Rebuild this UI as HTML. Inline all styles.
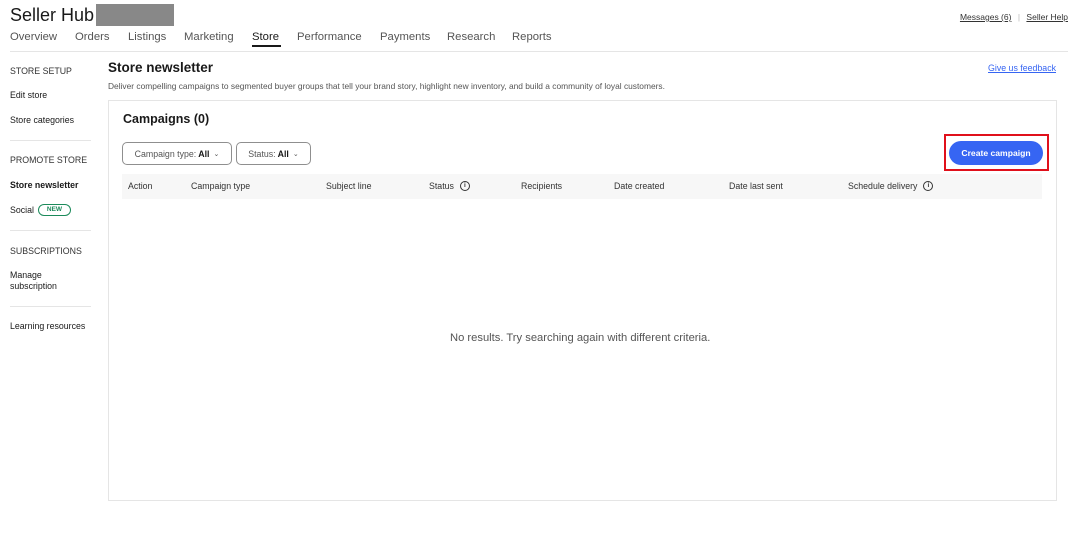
<!DOCTYPE html>
<html><head><style>
*{margin:0;padding:0;box-sizing:border-box}
body{width:1080px;height:539px;background:#fff;font-family:"Liberation Sans",sans-serif;color:#191919;position:relative;overflow:hidden}
.a{position:absolute;white-space:nowrap}
.nav{font-size:11.3px;color:#555;top:31px}
.sb{font-size:8.8px;left:10px;color:#191919}
.hr{position:absolute;height:1px;background:#e5e5e5}
.th{font-size:8.8px;top:181px;color:#333;display:flex;align-items:center}
.info{display:inline-block;width:10px;height:10px;border:1.3px solid #333;border-radius:50%;font-size:6.5px;text-align:center;line-height:8px;font-weight:bold;margin-left:6px}
.flt{position:absolute;top:142px;height:23px;border:1px solid #8f8f8f;border-radius:5px;font-size:8.8px;color:#555;display:flex;align-items:center;justify-content:center}
.flt b{color:#191919;margin-left:2px}
</style></head><body>
<div class="a" style="left:10px;top:5px;font-size:18px">Seller Hub</div>
<div class="a" style="left:96px;top:4px;width:78px;height:22px;background:#888"></div>
<div class="a" style="right:12px;top:12px;font-size:8.5px;color:#333"><u>Messages (6)</u> <span style="color:#bbb;margin:0 4px">|</span> <u>Seller Help</u></div>
<div class="a nav" style="left:10px">Overview</div>
<div class="a nav" style="left:75px">Orders</div>
<div class="a nav" style="left:128px">Listings</div>
<div class="a nav" style="left:184px">Marketing</div>
<div class="a nav" style="left:252px;color:#191919">Store</div>
<div class="a nav" style="left:297px">Performance</div>
<div class="a nav" style="left:380px">Payments</div>
<div class="a nav" style="left:447px">Research</div>
<div class="a nav" style="left:512px">Reports</div>
<div class="a" style="left:252px;top:45px;width:29px;height:2px;background:#191919"></div>
<div class="hr" style="left:10px;top:51px;width:1058px"></div>

<div class="a sb" style="top:66px;color:#333">STORE SETUP</div>
<div class="a sb" style="top:90px">Edit store</div>
<div class="a sb" style="top:115px">Store categories</div>
<div class="hr" style="left:10px;top:140px;width:81px"></div>
<div class="a sb" style="top:155px;color:#333">PROMOTE STORE</div>
<div class="a sb" style="top:180px;font-weight:bold">Store newsletter</div>
<div class="a sb" style="top:205px">Social</div>
<div class="a" style="left:38px;top:204px;width:33px;height:12px;border:1px solid #1b8a5a;border-radius:7px;font-size:6.5px;font-weight:bold;color:#1b8a5a;text-align:center;line-height:10px">NEW</div>
<div class="hr" style="left:10px;top:230px;width:81px"></div>
<div class="a sb" style="top:246px;color:#333">SUBSCRIPTIONS</div>
<div class="a sb" style="top:270px;line-height:11px">Manage<br>subscription</div>
<div class="hr" style="left:10px;top:306px;width:81px"></div>
<div class="a sb" style="top:321px">Learning resources</div>

<div class="a" style="left:108px;top:60px;font-size:13.5px;font-weight:bold">Store newsletter</div>
<div class="a" style="left:108px;top:81px;font-size:8.4px;color:#555">Deliver compelling campaigns to segmented buyer groups that tell your brand story, highlight new inventory, and build a community of loyal customers.</div>
<div class="a" style="right:24px;top:63px;font-size:8.8px;color:#3665f3;text-decoration:underline">Give us feedback</div>

<div class="a" style="left:108px;top:100px;width:949px;height:401px;border:1px solid #e5e5e5"></div>
<div class="a" style="left:123px;top:112px;font-size:12.5px;font-weight:bold">Campaigns (0)</div>
<div class="flt" style="left:122px;width:110px">Campaign type:<b>All</b><span style="margin-left:4px;font-size:7px">&#8964;</span></div>
<div class="flt" style="left:236px;width:75px">Status:<b>All</b><span style="margin-left:4px;font-size:7px">&#8964;</span></div>
<div class="a" style="left:944px;top:134px;width:105px;height:37px;border:2px solid #e0101b"></div>
<div class="a" style="left:949px;top:141px;width:94px;height:24px;background:#3665f3;border-radius:12px;color:#fff;font-size:8.6px;font-weight:bold;text-align:center;line-height:24px">Create campaign</div>

<div class="a" style="left:122px;top:174px;width:920px;height:25px;background:#f7f7f7"></div>
<div class="a th" style="left:128px">Action</div>
<div class="a th" style="left:191px">Campaign type</div>
<div class="a th" style="left:326px">Subject line</div>
<div class="a th" style="left:429px">Status<span class="info">i</span></div>
<div class="a th" style="left:521px">Recipients</div>
<div class="a th" style="left:614px">Date created</div>
<div class="a th" style="left:729px">Date last sent</div>
<div class="a th" style="left:848px">Schedule delivery<span class="info">i</span></div>

<div class="a" style="left:450px;top:332px;font-size:11.2px;color:#555">No results. Try searching again with different criteria.</div>
</body></html>
